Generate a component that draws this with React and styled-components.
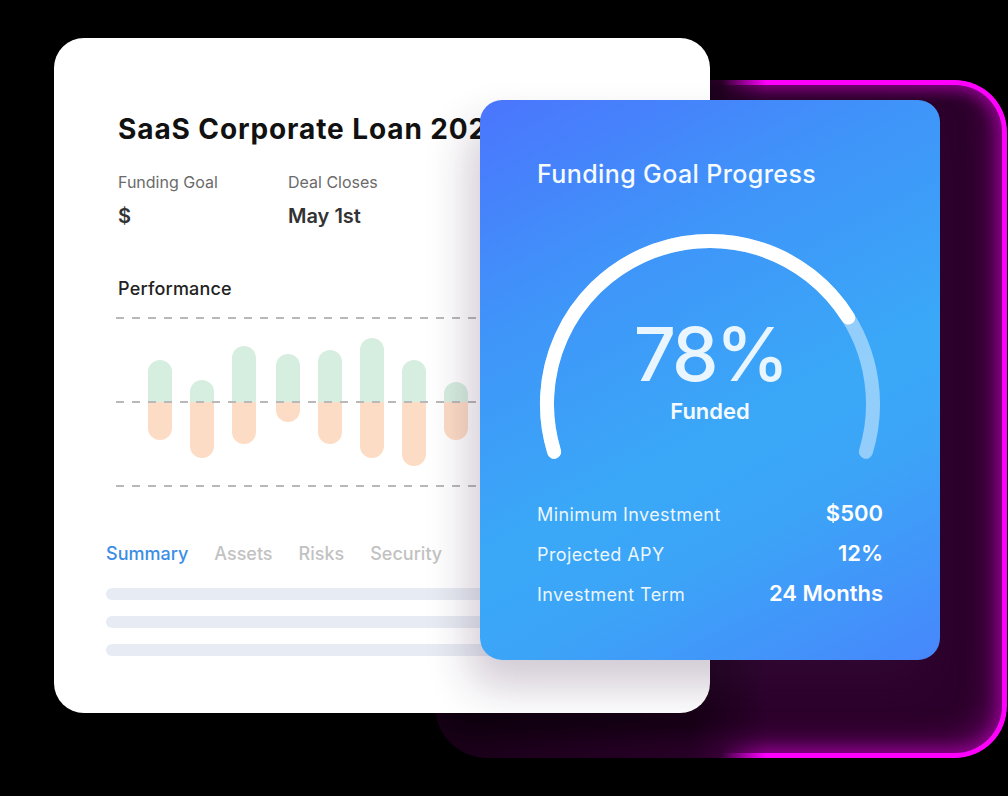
import React from "react";
import styled, { createGlobalStyle } from "styled-components";

const GlobalStyle = createGlobalStyle`
  html, body {
    margin: 0;
    padding: 0;
    background: #000;
  }
  body {
    font-family: Inter, "Noto Sans", sans-serif;
  }
`;

const Stage = styled.div`
  position: relative;
  width: 1008px;
  height: 796px;
  overflow: hidden;
  background: #000;
  padding: 38px 0 0 54px;
  box-sizing: border-box;
`;

/* the posterised shadow behind the blue card */
const Glow = styled.div`
  position: absolute;
  left: 435px;
  top: 80px;
  width: 572px;
  height: 678px;
  border-radius: 52px;
  z-index: 0;

  &::before {
    content: "";
    position: absolute;
    inset: 0;
    border-radius: inherit;
    background: #2c002b;
    box-shadow: inset -12px -12px 24px 8px #520050;
    -webkit-mask-image: linear-gradient(90deg, rgba(0,0,0,0.3) 0%, rgba(0,0,0,0.5) 45%, #000 58%);
    mask-image: linear-gradient(90deg, rgba(0,0,0,0.3) 0%, rgba(0,0,0,0.5) 45%, #000 58%);
  }

  &::after {
    content: "";
    position: absolute;
    inset: 0;
    border-radius: inherit;
    box-shadow: inset 0 0 0 5px #ff00ff, inset 0 0 14px 10px #8b008a;
    -webkit-mask-image: linear-gradient(90deg, transparent 50%, #000 58%);
    mask-image: linear-gradient(90deg, transparent 50%, #000 58%);
  }
`;

const WhiteCard = styled.div`
  position: relative;
  z-index: 1;
  width: 656px;
  height: 675px;
  box-sizing: border-box;
  background: #fff;
  border-radius: 30px;
  padding: 74px 52px 0 52px;
  display: flex;
  flex-direction: column;
  overflow: hidden;
`;

const Indent = styled.div`
  padding-left: ${(p) => p.$by}px;
`;

const Title = styled.h1`
  margin: 0;
  font-size: 28px;
  line-height: 34px;
  font-weight: 700;
  color: #111;
  white-space: nowrap;
  letter-spacing: 0.9px;
`;

const Meta = styled.div`
  display: grid;
  grid-template-columns: 170px auto;
  margin-top: 26px;
`;

const MetaLabel = styled.div`
  font-size: 16px;
  line-height: 20px;
  color: #6b6b6b;
`;

const MetaValue = styled.div`
  margin-top: 12px;
  font-size: 20px;
  line-height: 24px;
  font-weight: 600;
  color: #333;
`;

const SectionTitle = styled.h2`
  margin: 50px 0 0 0;
  font-size: 18px;
  line-height: 22px;
  font-weight: 500;
  letter-spacing: 0.2px;
  color: #222;
`;

const Tabs = styled.div`
  display: flex;
  gap: 26px;
  margin-top: 53px;
`;

const Tab = styled.span`
  font-size: 18px;
  line-height: 22px;
  font-weight: 500;
  color: ${(p) => (p.$active ? "#3b8de6" : "#c2c2c2")};
`;

const Lines = styled.div`
  display: flex;
  flex-direction: column;
  gap: 16px;
  margin-top: 23px;
`;

const Line = styled.div`
  height: 12px;
  border-radius: 6px;
  background: #e7ebf3;
`;

const BlueCard = styled.div`
  position: absolute;
  z-index: 2;
  left: 480px;
  top: 100px;
  width: 460px;
  height: 560px;
  box-sizing: border-box;
  border-radius: 22px;
  padding: 59px 57px 0 57px;
  display: flex;
  flex-direction: column;
  color: #fff;
  background: linear-gradient(152deg, #4b75fd 0%, #3f95f9 30%, #3aa8f7 58%, #3ca4f7 72%, #4787fc 100%);
  box-shadow: -10px 26px 44px rgba(60, 30, 70, 0.24);
`;

const CardTitle = styled.h2`
  margin: 0;
  font-size: 25px;
  line-height: 30px;
  font-weight: 500;
  letter-spacing: 0.4px;
  color: #f6fbff;
`;

const Gauge = styled.div`
  position: relative;
  width: 346px;
  height: 240px;
  margin-top: 37px;
`;

const GaugeText = styled.div`
  position: absolute;
  left: 0;
  right: 0;
  top: 91px;
  display: flex;
  flex-direction: column;
  align-items: center;
`;

const Percent = styled.div`
  font-size: 74px;
  line-height: 74px;
  font-weight: 500;
  letter-spacing: -3px;
  color: #eaf6ff;
`;

const Funded = styled.div`
  margin-top: 9px;
  font-size: 22px;
  line-height: 22px;
  font-weight: 600;
  color: #f4faff;
`;

const Stats = styled.div`
  display: flex;
  flex-direction: column;
  gap: 12px;
  margin-top: 34px;
`;

const StatRow = styled.div`
  display: flex;
  justify-content: space-between;
  align-items: baseline;
  line-height: 26px;
`;

const StatLabel = styled.span`
  font-size: 18px;
  letter-spacing: 0.4px;
  color: rgba(255, 255, 255, 0.92);
`;

const StatValue = styled.span`
  font-size: 22px;
  font-weight: 600;
  color: #fff;
`;

const bars = [
  [32, 60, 140],
  [74, 80, 158],
  [116, 46, 144],
  [160, 54, 122],
  [202, 50, 144],
  [244, 38, 158],
  [286, 60, 166],
  [328, 82, 140],
];

function Chart() {
  const mid = 102;
  return (
    <svg width="400" height="190" viewBox="0 0 400 190" style={{ display: "block" }}>
      <defs>
        <clipPath id="above">
          <rect x="0" y="0" width="400" height={mid} />
        </clipPath>
        <clipPath id="below">
          <rect x="0" y={mid} width="400" height={190 - mid} />
        </clipPath>
      </defs>
      {bars.map(([x, top, bottom], i) => (
        <g key={i}>
          <rect x={x} y={top} width="24" height={bottom - top} rx="12" fill="#d6eedf" clipPath="url(#above)" />
          <rect x={x} y={top} width="24" height={bottom - top} rx="12" fill="#fddcc5" clipPath="url(#below)" />
        </g>
      ))}
      {[18, mid, 186].map((y) => (
        <line key={y} x1="0" x2="400" y1={y} y2={y} stroke="#b9b9b9" strokeWidth="2" strokeDasharray="8 8" />
      ))}
    </svg>
  );
}

function GaugeArc() {
  return (
    <svg width="346" height="240" viewBox="0 0 346 240" style={{ display: "block" }}>
      <path
        d="M 17.1 225.7 A 163 163 0 1 1 328.9 225.7"
        fill="none"
        stroke="rgba(255,255,255,0.45)"
        strokeWidth="14"
        strokeLinecap="round"
      />
      <path
        d="M 17.1 225.7 A 163 163 0 0 1 311.2 91.6"
        fill="none"
        stroke="#fff"
        strokeWidth="14"
        strokeLinecap="round"
      />
    </svg>
  );
}

const stats = [
  ["Minimum Investment", "$500"],
  ["Projected APY", "12%"],
  ["Investment Term", "24 Months"],
];

export default function App() {
  return (
    <>
      <GlobalStyle />
      <Stage>
        <Glow />
        <WhiteCard>
          <Indent $by={12}>
            <Title>SaaS Corporate Loan 2024</Title>
            <Meta>
              <div>
                <MetaLabel>Funding Goal</MetaLabel>
                <MetaValue>$</MetaValue>
              </div>
              <div>
                <MetaLabel>Deal Closes</MetaLabel>
                <MetaValue>May 1st</MetaValue>
              </div>
            </Meta>
            <SectionTitle>Performance</SectionTitle>
          </Indent>
          <Indent $by={10}>
            <Chart />
          </Indent>
          <Tabs>
            <Tab $active>Summary</Tab>
            <Tab>Assets</Tab>
            <Tab>Risks</Tab>
            <Tab>Security</Tab>
          </Tabs>
          <Lines>
            <Line />
            <Line />
            <Line />
          </Lines>
        </WhiteCard>
        <BlueCard>
          <CardTitle>Funding Goal Progress</CardTitle>
          <Gauge>
            <GaugeArc />
            <GaugeText>
              <Percent>78%</Percent>
              <Funded>Funded</Funded>
            </GaugeText>
          </Gauge>
          <Stats>
            {stats.map(([label, value]) => (
              <StatRow key={label}>
                <StatLabel>{label}</StatLabel>
                <StatValue>{value}</StatValue>
              </StatRow>
            ))}
          </Stats>
        </BlueCard>
      </Stage>
    </>
  );
}
